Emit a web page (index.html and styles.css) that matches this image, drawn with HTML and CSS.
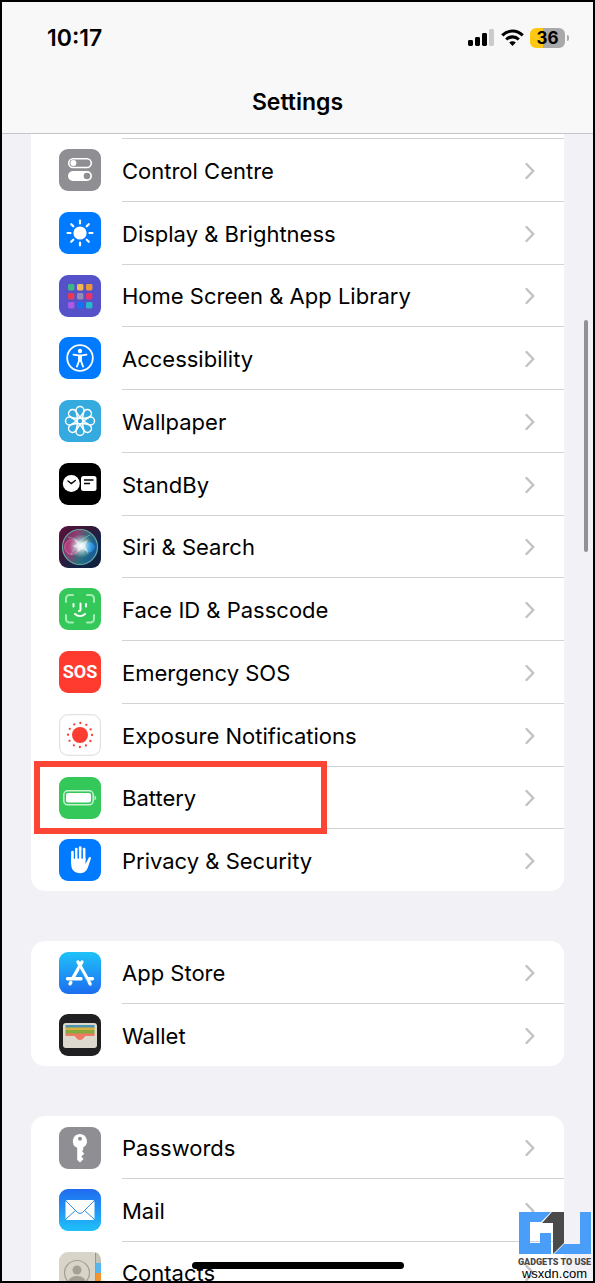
FILE: index.html
```html
<!DOCTYPE html>
<html lang="en">
<head>
	<meta charset="UTF-8">
	<meta name="viewport" content="width=device-width, initial-scale=1">
	<title>Settings</title>
	<link rel="stylesheet" href="styles.css">
</head>
<body>
	<!-- Shared chevron -->
	<svg class="defs" width="0" height="0" aria-hidden="true">
		<symbol id="chevron" viewBox="0 0 10 18">
			<path d="M1.5 2 8.3 9 1.5 16" fill="none" stroke="#c2c2c6" stroke-width="2.4" stroke-linecap="round" stroke-linejoin="round"/>
		</symbol>
	</svg>

	<div class="phone">
		<header class="header">
			<div class="status">
				<span class="time">10:17</span>
				<div class="status-icons">
					<svg width="28" height="18" viewBox="0 0 28 18">
						<rect x="1" y="11" width="5" height="6" rx="1.4"/>
						<rect x="8" y="8" width="5" height="9" rx="1.4"/>
						<rect x="15" y="4" width="5" height="13" rx="1.4"/>
						<rect x="22" y="0" width="5" height="17" rx="1.4" fill="#cbcbcc"/>
					</svg>
					<svg width="23" height="18" viewBox="0 0 23 18">
						<g fill="none" stroke="#000" stroke-width="3.1">
							<path d="M1.3 6.4C7 .6 16 .6 21.7 6.4"/>
							<path d="M5.2 10.5c3.6-3.5 9-3.5 12.6 0"/>
						</g>
						<path d="M8.2 13.6c1.9-1.7 4.7-1.7 6.6 0L11.5 17z"/>
					</svg>
					<div class="battery">36</div>
				</div>
			</div>
			<h1>Settings</h1>
		</header>

		<main class="content">
			<nav class="card card-first">
				<a class="row" href="#control-centre">
					<svg class="icon" viewBox="0 0 42 42">
						<rect width="42" height="42" rx="9" fill="#8e8e93"/>
						<rect x="9.7" y="9.7" width="22.6" height="8.8" rx="4.4" fill="none" stroke="#fff" stroke-width="1.6"/>
						<circle cx="14.4" cy="14.1" r="3" fill="#fff"/>
						<rect x="9" y="22" width="24" height="10" rx="5" fill="#fff"/>
						<circle cx="28" cy="27" r="3.3" fill="#8e8e93"/>
					</svg>
					<span class="body">Control Centre <svg class="chevron"><use href="#chevron"/></svg></span>
				</a>
				<a class="row" href="#display">
					<svg class="icon" viewBox="0 0 42 42">
						<rect width="42" height="42" rx="9" fill="#007aff"/>
						<circle cx="21" cy="21" r="6.6" fill="#fff"/>
						<path d="M21 8.5v3M21 30.5v3M8.5 21h3M30.5 21h3M12.2 12.2l2.1 2.1M27.7 27.7l2.1 2.1M12.2 29.8l2.1-2.1M27.7 14.3l2.1-2.1" stroke="#fff" stroke-width="2.2" stroke-linecap="round"/>
					</svg>
					<span class="body">Display &amp; Brightness <svg class="chevron"><use href="#chevron"/></svg></span>
				</a>
				<a class="row" href="#home-screen">
					<svg class="icon" viewBox="0 0 42 42">
						<rect width="42" height="42" rx="9" fill="#5552c9"/>
						<rect x="9" y="9" width="6.4" height="6.4" rx="1.4" fill="#41b58a"/>
						<rect x="18" y="9" width="6.4" height="6.4" rx="1.4" fill="#f3b951"/>
						<rect x="27" y="9" width="6.4" height="6.4" rx="1.4" fill="#ee9635"/>
						<rect x="9" y="18" width="6.4" height="6.4" rx="1.4" fill="#e73b55"/>
						<rect x="18" y="18" width="6.4" height="6.4" rx="1.4" fill="#918cb5"/>
						<rect x="27" y="18" width="6.4" height="6.4" rx="1.4" fill="#ea3468"/>
						<rect x="9" y="27" width="6.4" height="6.4" rx="1.4" fill="#a95ae6"/>
						<rect x="18" y="27" width="6.4" height="6.4" rx="1.4" fill="#1671f2"/>
						<rect x="27" y="27" width="6.4" height="6.4" rx="1.4" fill="#24b9cb"/>
					</svg>
					<span class="body">Home Screen &amp; App Library <svg class="chevron"><use href="#chevron"/></svg></span>
				</a>
				<a class="row" href="#accessibility">
					<svg class="icon" viewBox="0 0 42 42">
						<rect width="42" height="42" rx="9" fill="#007aff"/>
						<circle cx="21" cy="21" r="12.8" fill="none" stroke="#fff" stroke-width="1.8"/>
						<circle cx="21" cy="14" r="2.2" fill="#fff"/>
						<path d="M14.5 17.6 19 18.4h4l4.5-.8M21 18.5v5M20 18.5v5.5l-2 5.5M22 18.5v5.5l2 5.5" fill="none" stroke="#fff" stroke-width="1.9" stroke-linecap="round" stroke-linejoin="round"/>
					</svg>
					<span class="body">Accessibility <svg class="chevron"><use href="#chevron"/></svg></span>
				</a>
				<a class="row" href="#wallpaper">
					<svg class="icon" viewBox="0 0 42 42">
						<rect width="42" height="42" rx="9" fill="#34aadf"/>
						<g fill="none" stroke="#fff" stroke-width="1.5">
							<g id="petals">
								<path id="petal" d="M18 21C19.5 17 17 13.5 17 10.5a4 4 0 0 1 8 0C25 13.5 22.5 17 24 21"/>
								<use href="#petal" transform="rotate(90 21 21)"/>
								<use href="#petal" transform="rotate(180 21 21)"/>
								<use href="#petal" transform="rotate(270 21 21)"/>
							</g>
							<use href="#petals" transform="rotate(45 21 21)"/>
						</g>
						<circle cx="21" cy="21" r="1.6" fill="#34aadf"/>
					</svg>
					<span class="body">Wallpaper <svg class="chevron"><use href="#chevron"/></svg></span>
				</a>
				<a class="row" href="#standby">
					<svg class="icon" viewBox="0 0 42 42">
						<rect width="42" height="42" rx="9"/>
						<circle cx="12.3" cy="20.5" r="8.5" fill="#fff"/>
						<path d="m9 18 3.3 2.5 4-3" fill="none" stroke="#000" stroke-width="1.4" stroke-linecap="round"/>
						<rect x="22" y="13" width="15.5" height="15" rx="2.5" fill="#fff"/>
						<path d="M25 17h9.5M25 20.5h6" stroke="#000" stroke-width="1.4"/>
					</svg>
					<span class="body">StandBy <svg class="chevron"><use href="#chevron"/></svg></span>
				</a>
				<a class="row" href="#siri">
					<svg class="icon" viewBox="0 0 42 42">
						<defs>
							<linearGradient id="siri-bg" x1="0" y1="0" x2="1" y2="1">
								<stop offset="0" stop-color="#5c123f"/>
								<stop offset=".35" stop-color="#3a1736"/>
								<stop offset=".7" stop-color="#11264a"/>
								<stop offset="1" stop-color="#101c35"/>
							</linearGradient>
							<linearGradient id="siri-orb" x1="0" y1=".3" x2="1" y2=".7">
								<stop offset="0" stop-color="#8b2a69"/>
								<stop offset=".3" stop-color="#a04a80"/>
								<stop offset=".6" stop-color="#2f8088"/>
								<stop offset="1" stop-color="#1565b8"/>
							</linearGradient>
							<radialGradient id="siri-glow">
								<stop offset="0" stop-color="#fff"/>
								<stop offset=".3" stop-color="#e2f6f5" stop-opacity=".8"/>
								<stop offset="1" stop-color="#a8e5e0" stop-opacity="0"/>
							</radialGradient>
						</defs>
						<rect width="42" height="42" rx="9" fill="url(#siri-bg)"/>
						<circle cx="21" cy="21" r="17.5" fill="url(#siri-orb)" fill-opacity=".8" stroke="#65aaa3" stroke-width="1.2"/>
						<circle cx="13" cy="21" r="7.5" fill="#e34d93" fill-opacity=".45" stroke="#ee8fbd" stroke-opacity=".5"/>
						<path d="M23 21c4-6 11-7 13 0-3 8-8 6-13 0z" fill="#2391ea" fill-opacity=".85"/>
						<path d="M9 11c10 2 18 6 20 17M31 9c-8 3-15 10-19 20" fill="none" stroke="#9fe5dc" stroke-opacity=".45"/>
						<circle cx="22" cy="20" r="12" fill="url(#siri-glow)"/>
						<path d="m15 13 7 4 7-3-3 6 3 6-6-3-4 3-1-4-5-2 5-2z" fill="#fff" fill-opacity=".5"/>
					</svg>
					<span class="body">Siri &amp; Search <svg class="chevron"><use href="#chevron"/></svg></span>
				</a>
				<a class="row" href="#face-id">
					<svg class="icon" viewBox="0 0 42 42">
						<rect width="42" height="42" rx="9" fill="#34c759"/>
						<path d="M7 14v-3.5A3.5 3.5 0 0 1 10.5 7H14M28 7h3.5a3.5 3.5 0 0 1 3.5 3.5V14M35 27v4a3.5 3.5 0 0 1-3.5 3.5H28M14 34.5h-3.5A3.5 3.5 0 0 1 7 31v-4" fill="none" stroke="#a4edb5" stroke-width="2" stroke-linecap="round"/>
						<path d="M14.5 16v2.5M27 16v2.5M21.5 15.5v6c0 1-.5 1.5-1.6 1.5M16 26c3 2.7 7 2.7 10 0" fill="none" stroke="#fff" stroke-width="2" stroke-linecap="round"/>
					</svg>
					<span class="body">Face ID &amp; Passcode <svg class="chevron"><use href="#chevron"/></svg></span>
				</a>
				<a class="row" href="#sos">
					<span class="icon icon-sos">SOS</span>
					<span class="body">Emergency SOS <svg class="chevron"><use href="#chevron"/></svg></span>
				</a>
				<a class="row" href="#exposure">
					<svg class="icon" viewBox="0 0 42 42">
						<rect x=".6" y=".6" width="40.8" height="40.8" rx="8.5" fill="#fff" stroke="#e2e2e4" stroke-width="1.2"/>
						<circle cx="21" cy="21" r="8" fill="#fc3d32"/>
						<circle cx="21" cy="21" r="12" fill="none" stroke="#fc3d32" stroke-width="2.3" stroke-linecap="round" stroke-dasharray="0 6.283"/>
					</svg>
					<span class="body">Exposure Notifications <svg class="chevron"><use href="#chevron"/></svg></span>
				</a>
				<a class="row row-marked" href="#battery">
					<svg class="icon" viewBox="0 0 42 42">
						<rect width="42" height="42" rx="9" fill="#34c759"/>
						<rect x="4.8" y="13.8" width="29.4" height="14" rx="4" fill="none" stroke="#c8f4d2" stroke-width="1.5"/>
						<rect x="7" y="16" width="25" height="9.6" rx="2" fill="#fff"/>
						<path d="M35.5 18.5c2.3.8 2.3 4 0 4.8z" fill="#c8f4d2"/>
					</svg>
					<span class="body">Battery <svg class="chevron"><use href="#chevron"/></svg></span>
				</a>
				<a class="row" href="#privacy">
					<svg class="icon" viewBox="0 0 42 42">
						<rect width="42" height="42" rx="9" fill="#007aff"/>
						<path d="M13.5 24V13M17.3 21V10M21.2 21V8.5M25.1 21v-11" stroke="#fff" stroke-width="2.7" stroke-linecap="round"/>
						<path d="M12.2 19h14.3v6l3.2-6.3c.8-1.5 2.7-.8 2.2.9l-2.5 7.5c-1.3 4.5-3.8 7.2-8.2 7.2-5.8 0-9-3.5-9-9z" fill="#fff"/>
						<path d="M15.4 12v8M19.2 11v9M23.2 11v9" stroke="#007aff" stroke-width=".9"/>
					</svg>
					<span class="body">Privacy &amp; Security <svg class="chevron"><use href="#chevron"/></svg></span>
				</a>
			</nav>

			<nav class="card">
				<a class="row" href="#app-store">
					<svg class="icon" viewBox="0 0 42 42">
						<linearGradient id="store-bg" x1="0" y1="0" x2="0" y2="1">
							<stop offset="0" stop-color="#1fc2f8"/>
							<stop offset="1" stop-color="#1c6df0"/>
						</linearGradient>
						<rect width="42" height="42" rx="9" fill="url(#store-bg)"/>
						<g stroke="#fff" stroke-width="3.4" stroke-linecap="round">
							<path d="M23 10 14.2 25.5M19 10l12.2 22M8.5 26.8H22M28.5 26.8h5"/>
							<path d="m11.8 30.5-.8 1.3"/>
						</g>
						<path d="m20.6 16.5 8 14" stroke="#2b97f4" stroke-width=".8"/>
					</svg>
					<span class="body">App Store <svg class="chevron"><use href="#chevron"/></svg></span>
				</a>
				<a class="row" href="#wallet">
					<svg class="icon" viewBox="0 0 42 42">
						<rect width="42" height="42" rx="9" fill="#202022"/>
						<rect x="4" y="9" width="34" height="25" rx="3" fill="#ded9ce"/>
						<path d="M6.5 11h29v3h-29z" fill="#4b94b2"/>
						<path d="M6.5 13.5h29v3h-29z" fill="#d9b13b"/>
						<path d="M6.5 16h29v4h-29z" fill="#86a83c"/>
						<path d="M6.5 19.5h29V22H27c-2 0-2.5 4-6 4s-4-4-6-4H6.5z" fill="#ee7a64"/>
					</svg>
					<span class="body">Wallet <svg class="chevron"><use href="#chevron"/></svg></span>
				</a>
			</nav>

			<nav class="card">
				<a class="row" href="#passwords">
					<svg class="icon" viewBox="0 0 42 42">
						<rect width="42" height="42" rx="9" fill="#8e8e93"/>
						<path d="M21 7a7.2 7.2 0 0 0-2.8 13.8V33l2.8 2.5 3.6-3.6-2.3-2.4 3-2.8-2.3-2.7 1.2-1V20.5A7.2 7.2 0 0 0 21 7z" fill="#fff"/>
						<circle cx="21" cy="11.8" r="2" fill="#8e8e93"/>
					</svg>
					<span class="body">Passwords <svg class="chevron"><use href="#chevron"/></svg></span>
				</a>
				<a class="row" href="#mail">
					<svg class="icon" viewBox="0 0 42 42">
						<linearGradient id="mail-bg" x1="0" y1="0" x2="0" y2="1">
							<stop offset="0" stop-color="#206bf0"/>
							<stop offset="1" stop-color="#1fc0f8"/>
						</linearGradient>
						<rect width="42" height="42" rx="9" fill="url(#mail-bg)"/>
						<rect x="6.5" y="11" width="29" height="20" rx="2" fill="#fff"/>
						<path d="m7 12 11.5 11.5q2.5 2 5 0L35 12M7 30l9.5-8.5M35 30l-9.5-8.5" fill="none" stroke="#2f8ee8" stroke-width="1"/>
					</svg>
					<span class="body">Mail <svg class="chevron"><use href="#chevron"/></svg></span>
				</a>
				<a class="row" href="#contacts">
					<svg class="icon" viewBox="0 0 42 42">
						<rect width="42" height="42" rx="9" fill="#d8d4c7"/>
						<path d="M36 0q6 2 6 9v2h-6z" fill="#c5c2b6"/>
						<path d="M37 11h5v10h-5z" fill="#55b5ef"/>
						<path d="M37 21h5v10h-5z" fill="#f4922d"/>
						<path d="M36.5 1v40" stroke="#8e8b82" stroke-width=".8"/>
						<circle cx="18" cy="21" r="12.5" fill="none" stroke="#a3a096" stroke-width="1.2"/>
						<circle cx="18" cy="18" r="4.5" fill="#a3a096"/>
						<path d="M9.5 30c0-8 17-8 17 0-4 4.5-13 4.5-17 0z" fill="#a3a096"/>
					</svg>
					<span class="body">Contacts <svg class="chevron"><use href="#chevron"/></svg></span>
				</a>
			</nav>
		</main>

		<div class="scrollbar"></div>
		<div class="home-bar"></div>

		<div class="watermark">
			<svg width="72" height="43" viewBox="0 0 72 43">
				<path d="M0 0h32L22 10H11v21h10V21h11v21H0z" fill="#4a9ef8"/>
				<path d="M33 0h12v31L34 42V11H23z" fill="#4b4a4a"/>
				<path d="M61 0h11v42H35l10-10h16z" fill="#4a9ef8"/>
			</svg>
			<span class="brand">GADGETS TO USE</span>
			<span class="site">wsxdn.com</span>
		</div>
	</div>
</body>
</html>
```
FILE: styles.css
```css
* {
	box-sizing: border-box;
}

body {
	margin: 0;
	font-family: Inter, "Liberation Sans", sans-serif;
	color: #000;
}

.defs {
	position: absolute;
}

.phone {
	position: relative;
	display: flex;
	flex-direction: column;
	height: 100vh;
	border: 2px solid #000;
	background: #f2f1f6;
	overflow: hidden;
}

/* header */

.header {
	flex: none;
	padding: 20px 24px 15px 45px;
	border-bottom: 1px solid #c6c6c9;
	background: #f8f8f9;
}

.status {
	display: flex;
	justify-content: space-between;
	align-items: center;
	height: 32px;
}

.time {
	font-size: 23px;
	font-weight: 600;
}

.status-icons {
	display: flex;
	align-items: center;
	gap: 6px;
}

.battery {
	position: relative;
	width: 35px;
	height: 20px;
	margin-right: 4px;
	border-radius: 6px;
	background: linear-gradient(to right, #fcc812 36%, #a9a9ab 36%);
	font-size: 17px;
	font-weight: 700;
	line-height: 20px;
	text-align: center;
}

.battery::after {
	content: "";
	position: absolute;
	top: 7px;
	right: -4px;
	width: 2px;
	height: 6px;
	border-radius: 0 2px 2px 0;
	background: #a9a9ab;
}

h1 {
	margin: 32px 0 0;
	padding-right: 21px;
	font-size: 23px;
	font-weight: 600;
	line-height: 32px;
	text-align: center;
}

/* settings list */

.content {
	flex: 1;
	min-height: 0;
	padding: 0 29px;
	overflow: hidden;
}

.card {
	margin-bottom: 50px;
	border-radius: 14px;
	background: #fff;
}

.card-first {
	padding-top: 4px;
	border-radius: 0 0 14px 14px;
}

.row {
	position: relative;
	display: flex;
	align-items: center;
	height: 63px;
	padding-left: 28px;
	color: inherit;
	text-decoration: none;
}

.row:nth-child(4n+3),
.card:not(.card-first) .row:first-child {
	height: 62px;
}

.icon {
	flex: none;
	width: 42px;
	height: 42px;
	margin: 1px 21px 0 0;
}

.icon-sos {
	border-radius: 9px;
	background: #ff3b30;
	color: #fff;
	font: bold 18px/42px Roboto, sans-serif;
	text-align: center;
}

.body {
	flex: 1;
	display: flex;
	justify-content: space-between;
	align-items: center;
	height: 100%;
	padding: 1px 29px 0 0;
	border-top: 1px solid #d3d3d5;
	font-size: 22px;
}

.card:not(.card-first) .row:first-child .body {
	border-top-color: transparent;
}

.chevron {
	width: 10px;
	height: 18px;
}

.row-marked {
	z-index: 1;
}

.row-marked::after {
	content: "";
	position: absolute;
	top: -5px;
	left: 3px;
	box-sizing: border-box;
	width: 293px;
	height: 73px;
	border: 6px solid #fb4635;
}

/* overlays */

.scrollbar {
	position: absolute;
	top: 318px;
	right: 5px;
	width: 4px;
	height: 232px;
	border-radius: 2px;
	background: #929296;
}

.home-bar {
	position: absolute;
	z-index: 1;
	bottom: 12px;
	left: 50%;
	width: 212px;
	height: 7px;
	margin-left: -106px;
	border-radius: 4px;
	background: #000;
}

.watermark {
	position: absolute;
	z-index: 1;
	right: 0;
	bottom: 0;
	display: flex;
	flex-direction: column;
	align-items: center;
	width: 77px;
	white-space: nowrap;
}

.brand {
	margin-top: 2px;
	color: #4b4a4a;
	font: 900 9px/10px Roboto, sans-serif;
}

.site {
	font: 13px/14px "Liberation Sans", sans-serif;
}
```
